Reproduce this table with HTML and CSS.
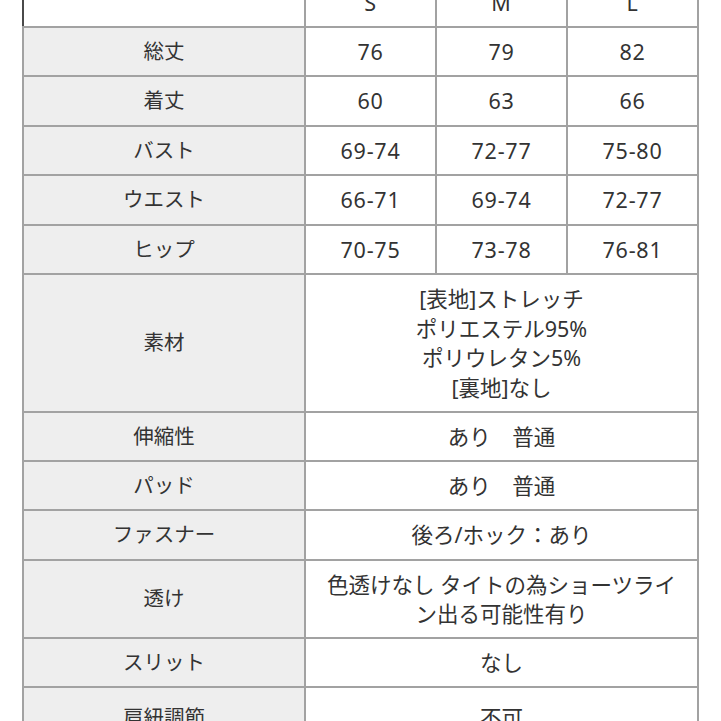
FILE: index.html
```html
<!DOCTYPE html>
<html lang="ja">
<head>
<meta charset="utf-8">
<title>サイズ表</title>
<link rel="stylesheet" href="styles.css">
</head>
<body>
<div class="sheet">
  <div class="cell corner"></div>
  <div class="cell num">S</div>
  <div class="cell num">M</div>
  <div class="cell num">L</div>

  <div class="cell label">総丈</div>
  <div class="cell num">76</div>
  <div class="cell num">79</div>
  <div class="cell num">82</div>

  <div class="cell label">着丈</div>
  <div class="cell num">60</div>
  <div class="cell num">63</div>
  <div class="cell num">66</div>

  <div class="cell label">バスト</div>
  <div class="cell num">69-74</div>
  <div class="cell num">72-77</div>
  <div class="cell num">75-80</div>

  <div class="cell label">ウエスト</div>
  <div class="cell num">66-71</div>
  <div class="cell num">69-74</div>
  <div class="cell num">72-77</div>

  <div class="cell label">ヒップ</div>
  <div class="cell num">70-75</div>
  <div class="cell num">73-78</div>
  <div class="cell num">76-81</div>

  <div class="cell label">素材</div>
  <div class="cell wide">[表地]ストレッチ<br>ポリエステル95%<br>ポリウレタン5%<br>[裏地]なし</div>

  <div class="cell label">伸縮性</div>
  <div class="cell wide">あり　普通</div>

  <div class="cell label">パッド</div>
  <div class="cell wide">あり　普通</div>

  <div class="cell label">ファスナー</div>
  <div class="cell wide">後ろ/ホック：あり</div>

  <div class="cell label">透け</div>
  <div class="cell wide">色透けなし タイトの為ショーツライン出る可能性有り</div>

  <div class="cell label">スリット</div>
  <div class="cell wide">なし</div>

  <div class="cell label">肩紐調節</div>
  <div class="cell wide">不可</div>
</div>
</body>
</html>
```
FILE: styles.css
```css
html, body {
  margin: 0;
  padding: 0;
  background: #ffffff;
  overflow: hidden;
}

.sheet {
  display: grid;
  grid-template-columns: 280px 129px 129px 129px;
  grid-template-rows: 47px 47px 48px 47px 48px 47px 136px 47px 47px 48px 76px 47px 60px;
  gap: 2px;
  padding: 2px;
  margin: -23px 0 0 22px;
  width: max-content;
  background: #a2a2a2;
  font-family: "Noto Sans", "Noto Sans CJK JP", sans-serif;
  font-size: 20.5px;
  line-height: 29.5px;
  color: #333333;
}

.cell {
  display: flex;
  align-items: center;
  justify-content: center;
  text-align: center;
  background: #ffffff;
}

.corner {
  margin-left: -2px;
  border-left: 2px solid #4a4a4a;
}

.label {
  background: #eeeeee;
}

.num {
  font-size: 21.5px;
  letter-spacing: 0.8px;
}

.wide {
  grid-column: 2 / span 3;
  padding: 0 16px;
  font-size: 21.5px;
}
```
